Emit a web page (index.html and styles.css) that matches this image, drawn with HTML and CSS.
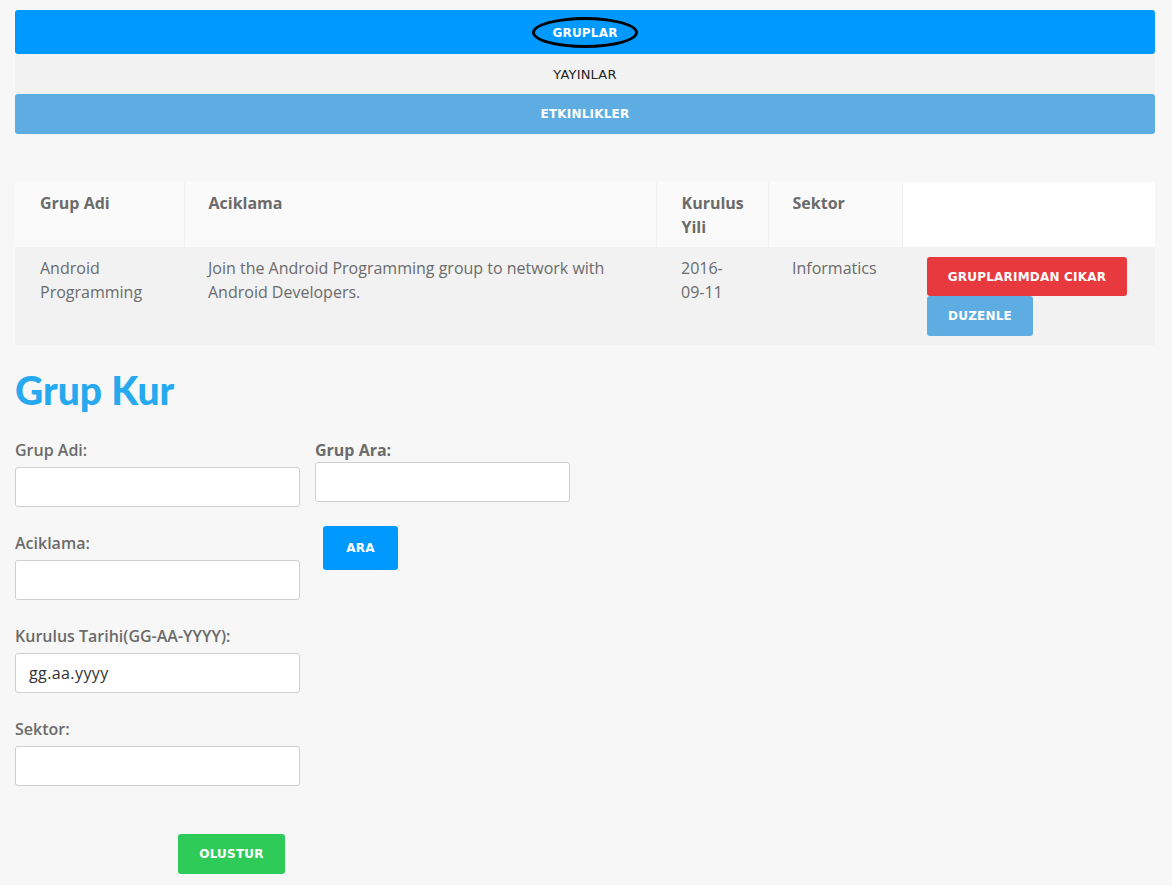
FILE: index.html
```html
<!DOCTYPE html>
<html lang="tr">
<head>
<meta charset="utf-8">
<title>Gruplar</title>
<link rel="stylesheet" href="styles.css">
</head>
<body>
<div class="page">
  <nav class="tabs">
    <a class="tab tab-active" href="#"><span class="circled">GRUPLAR</span></a>
    <a class="tab tab-plain" href="#">YAYINLAR</a>
    <a class="tab tab-light" href="#">ETKINLIKLER</a>
  </nav>

  <table class="groups">
    <colgroup>
      <col class="c1"><col class="c2"><col class="c3"><col class="c4"><col class="c5">
    </colgroup>
    <thead>
      <tr>
        <th>Grup Adi</th>
        <th>Aciklama</th>
        <th>Kurulus Yili</th>
        <th>Sektor</th>
        <th class="blank"></th>
      </tr>
    </thead>
    <tbody>
      <tr>
        <td>Android Programming</td>
        <td>Join the Android Programming group to network with Android Developers.</td>
        <td class="year">2016-09-11</td>
        <td>Informatics</td>
        <td>
          <button class="btn btn-red">GRUPLARIMDAN CIKAR</button>
          <button class="btn btn-blue">DUZENLE</button>
        </td>
      </tr>
    </tbody>
  </table>

  <h1 class="title">Grup Kur</h1>

  <div class="forms">
    <form class="create">
      <label class="lbl">Grup Adi:</label>
      <input class="field" type="text">
      <label class="lbl">Aciklama:</label>
      <input class="field" type="text">
      <label class="lbl">Kurulus Tarihi(GG-AA-YYYY):</label>
      <input class="field date" type="text" placeholder="gg.aa.yyyy">
      <label class="lbl">Sektor:</label>
      <input class="field" type="text">
      <button class="btn btn-green" type="button">OLUSTUR</button>
    </form>
    <form class="search">
      <label class="lbl lbl-bold">Grup Ara:</label>
      <input class="field field-search" type="text">
      <button class="btn btn-ara" type="button">ARA</button>
    </form>
  </div>
</div>
</body>
</html>
```

FILE: styles.css
```css
* { box-sizing: border-box; }

html, body {
  margin: 0;
  padding: 0;
  background: #f7f7f7;
}

body {
  font-family: "Open Sans", "Liberation Sans", sans-serif;
  font-size: 16px;
  line-height: 24px;
  color: #6b6b6b;
}

.page {
  padding: 10px 17px 0 15px;
}

.tabs {
  display: flex;
  flex-direction: column;
}

.tab {
  display: flex;
  align-items: center;
  justify-content: center;
  height: 40px;
  text-decoration: none;
  font-family: "DejaVu Sans", "Liberation Sans", sans-serif;
  font-size: 12px;
  letter-spacing: 0.2px;
  border-radius: 3px;
}

.tab-active {
  height: 44px;
  padding-top: 1px;
  background: #0099ff;
  color: #fff;
  font-weight: bold;
}

.tab-plain {
  background: #f2f2f2;
  color: #222;
  font-size: 13px;
  font-weight: normal;
  border-radius: 0;
  padding-top: 1px;
}

.tab-light {
  background: #5dade2;
  color: #fff;
  font-weight: bold;
}

.circled {
  display: inline-flex;
  align-items: center;
  justify-content: center;
  width: 106px;
  height: 31px;
  border: 3px solid #000;
  border-radius: 50%;
}

.groups {
  margin-top: 48px;
  width: 1140px;
  border-collapse: collapse;
  table-layout: fixed;
}

.c1 { width: 169px; }
.c2 { width: 472px; }
.c3 { width: 112px; }
.c4 { width: 134px; }
.c5 { width: 253px; }

.groups th {
  text-align: left;
  vertical-align: top;
  font-weight: bold;
  background: #fafafa;
  border-right: 1px solid #f1f1f1;
  padding: 9px 20px 8px 24px;
  height: 65px;
}

.groups th:first-child { padding-left: 25px; }

.groups th.blank {
  background: #fff;
  border-right: none;
}

.groups td {
  vertical-align: top;
  background: #f2f2f2;
  padding: 9px 20px 9px 24px;
}

.groups td:first-child { padding-left: 25px; }
.groups td:nth-child(3),
.groups th:nth-child(3) { padding-left: 25px; }
.groups td.year { padding-right: 28px; }
.groups td:last-child { padding-left: 25px; padding-top: 10px; }

.btn {
  display: block;
  border: none;
  border-radius: 3px;
  color: #fff;
  font-family: "DejaVu Sans", "Liberation Sans", sans-serif;
  font-weight: bold;
  font-size: 12px;
  letter-spacing: 0.2px;
  padding: 0;
  cursor: pointer;
}

.btn-red {
  width: 200px;
  height: 39px;
  background: #e8393e;
}

.btn-blue {
  width: 106px;
  height: 40px;
  background: #5dade2;
}

.title {
  margin: 20px 0 0 0;
  font-family: "Lato", "DejaVu Sans", sans-serif;
  font-weight: 900;
  font-size: 39px;
  line-height: 50px;
  color: #27a9ef;
}

.forms {
  display: flex;
  align-items: flex-start;
  margin-top: 23px;
}

.create {
  width: 285px;
  display: flex;
  flex-direction: column;
  margin-right: 15px;
}

.search {
  width: 255px;
  display: flex;
  flex-direction: column;
  align-items: flex-start;
}

.lbl {
  display: block;
  font-weight: 600;
  color: #6b6b6b;
  margin-bottom: 5px;
}

.create .lbl ~ .lbl { margin-top: 24px; }

.lbl-bold {
  font-weight: bold;
  margin-bottom: 0;
}

.field {
  width: 285px;
  height: 40px;
  border: 1px solid #cfcfcf;
  border-radius: 3px;
  background: #fff;
  font-family: "Open Sans", "Liberation Sans", sans-serif;
  font-size: 16px;
  padding: 0 13px;
  color: #333;
}

.field.date { letter-spacing: 0.4px; }
.field.date::placeholder { color: #333; opacity: 1; }

.field-search { width: 255px; }

.btn-ara {
  margin: 24px 0 0 8px;
  width: 75px;
  height: 44px;
  background: #0099ff;
}

.btn-green {
  margin: 48px 0 10px 163px;
  width: 107px;
  height: 40px;
  background: #2fcb59;
}
```
